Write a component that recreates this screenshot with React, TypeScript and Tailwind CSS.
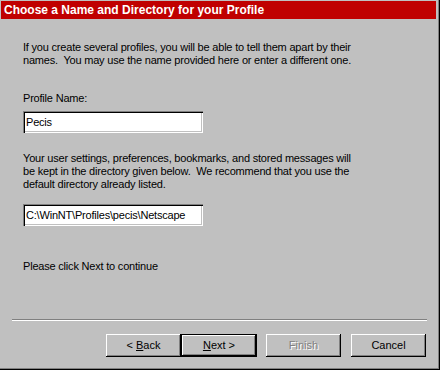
import React from "react";

const font = { fontFamily: '"Liberation Sans", Arial, sans-serif' };

function Btn({ children, def, disabled }: { children: React.ReactNode; def?: boolean; disabled?: boolean }) {
  if (def) {
    return (
      <div className="w-[76px] h-[23px] border border-black">
        <div className="w-full h-full flex items-center justify-center text-[11px] text-black shadow-[inset_-1px_-1px_#000,inset_1px_1px_#fff,inset_-2px_-2px_#808080]">
          <span>{children}</span>
        </div>
      </div>
    );
  }
  return (
    <div
      className={
        "w-[75px] h-[23px] flex items-center justify-center text-[11px] shadow-[inset_-1px_-1px_#000,inset_1px_1px_#fff,inset_-2px_-2px_#808080] " +
        (disabled ? "text-[#808080] [text-shadow:1px_1px_#fff]" : "text-black")
      }
    >
      <span>{children}</span>
    </div>
  );
}

function Field({ value }: { value: string }) {
  return (
    <div className="w-[180px] h-[22px] bg-white shadow-[inset_1px_1px_#808080,inset_2px_2px_#000,inset_-1px_-1px_#fff,inset_-2px_-2px_#c0c0c0] flex items-center pl-[3px] text-[11px] tracking-[-0.2px] text-black">
      {value}
    </div>
  );
}

export default function App() {
  return (
    <div
      style={font}
      className="w-[440px] h-[370px] bg-[#c0c0c0] flex flex-col shadow-[inset_-1px_-1px_#000,inset_-2px_-2px_#808080] overflow-hidden"
    >
      <div className="mt-[1px] ml-[1px] w-[435px] h-[18px] bg-[#c00000] flex items-center pl-[3px] text-white font-bold text-[12px] leading-none">
        Choose a Name and Directory for your Profile
      </div>
      <div className="flex flex-col pl-[23px] text-[11px] leading-[13px] tracking-[-0.2px] text-black">
        <p className="mt-[22px]">
          If you create several profiles, you will be able to tell them apart by their
          <br />
          names.&nbsp; You may use the name provided here or enter a different one.
        </p>
        <p className="mt-[25px]">Profile Name:</p>
        <div className="mt-[6px]">
          <Field value="Pecis" />
        </div>
        <p className="mt-[19px]">
          Your user settings, preferences, bookmarks, and stored messages will
          <br />
          be kept in the directory given below.&nbsp; We recommend that you use the
          <br />
          default directory already listed.
        </p>
        <div className="mt-[13px]">
          <Field value="C:\WinNT\Profiles\pecis\Netscape" />
        </div>
        <p className="mt-[34px]">Please click Next to continue</p>
      </div>
      <div className="mt-[46px] ml-[12px] w-[415px] h-[2px] border-t border-[#808080] border-b border-b-white" />
      <div className="mt-[13px] flex pl-[106px] gap-0">
        <Btn>
          &lt; <u>B</u>ack
        </Btn>
        <Btn def>
          <u>N</u>ext &gt;
        </Btn>
        <div className="w-[9px]" />
        <Btn disabled>Finish</Btn>
        <div className="w-[10px]" />
        <Btn>Cancel</Btn>
      </div>
    </div>
  );
}
